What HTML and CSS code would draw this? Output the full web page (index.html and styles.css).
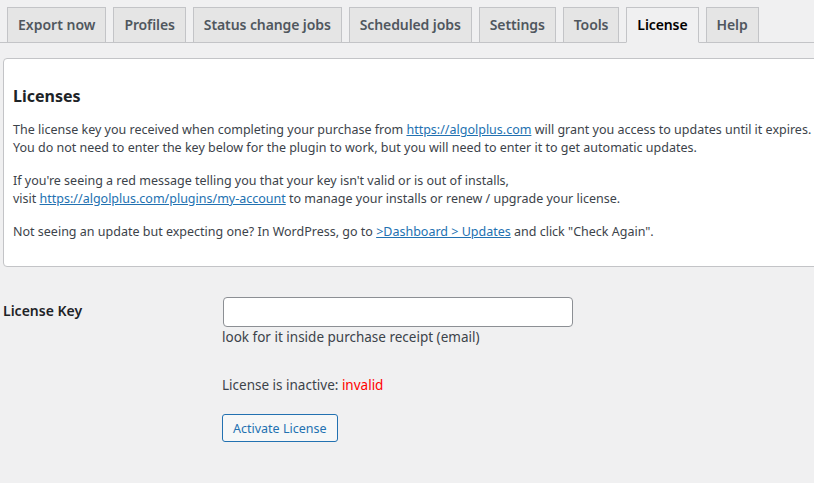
FILE: index.html
```html
<!DOCTYPE html>
<html lang="en">
<head>
  <meta charset="UTF-8" />
  <title>License</title>
  <link rel="stylesheet" href="styles.css">
</head>
<body>
  <nav class="nav-tabs">
    <a class="nav-tab">Export now</a>
    <a class="nav-tab">Profiles</a>
    <a class="nav-tab">Status change jobs</a>
    <a class="nav-tab">Scheduled jobs</a>
    <a class="nav-tab">Settings</a>
    <a class="nav-tab">Tools</a>
    <a class="nav-tab active">License</a>
    <a class="nav-tab">Help</a>
  </nav>

  <div class="license-box">
    <h2>Licenses</h2>
    <p>The license key you received when completing your purchase from <a href="#">https://algolplus.com</a> will grant you access to updates until it expires.<br>
    You do not need to enter the key below for the plugin to work, but you will need to enter it to get automatic updates.</p>
    <p>If you're seeing a red message telling you that your key isn't valid or is out of installs,<br>
    visit <a href="#">https://algolplus.com/plugins/my-account</a> to manage your installs or renew / upgrade your license.</p>
    <p>Not seeing an update but expecting one? In WordPress, go to <a href="#">&gt;Dashboard &gt; Updates</a> and click "Check Again".</p>
  </div>

  <div class="form-row">
    <label class="form-label" for="license-key">License Key</label>
    <div class="form-field">
      <input type="text" id="license-key" class="key-input">
      <p class="description">look for it inside purchase receipt (email)</p>
      <p class="status">License is inactive: <span class="invalid">invalid</span></p>
      <button class="button">Activate License</button>
    </div>
  </div>
</body>
</html>
```

FILE: styles.css
```css
body {
  margin: 0;
  padding: 7px 0 0 3px;
  background-color: #f0f0f1;
  color: #3c434a;
  font-family: "Noto Sans", sans-serif;
  font-size: 12.5px;
  overflow: hidden;
}

/* Tabs */
.nav-tabs {
  display: flex;
  gap: 7px;
  padding-left: 7px;
  margin-left: -3px;
  border-bottom: 1px solid #c3c4c7;
}

.nav-tab {
  display: block;
  padding: 5px 10px;
  margin-bottom: -1px;
  font-size: 14px;
  font-weight: 600;
  line-height: 24px;
  color: #50575e;
  background-color: #e5e5e5;
  border: 1px solid #c3c4c7;
  text-decoration: none;
  white-space: nowrap;
}

.nav-tab + .nav-tab {
  letter-spacing: -0.1px;
}

.nav-tab.active {
  color: #000;
  background-color: #f0f0f1;
  border-bottom-color: #f0f0f1;
}

/* Licenses box */
.license-box {
  margin-top: 15px;
  width: 840px;
  padding: 8px 9px 10px;
  background-color: #fff;
  border: 1px solid #c3c4c7;
  border-radius: 4px;
}

.license-box h2 {
  font-size: 16px;
  font-weight: 700;
  color: #1d2327;
  margin: 18px 0 14px;
}

.license-box p {
  margin: 15px 0;
  line-height: 18px;
}

.license-box p:first-of-type {
  margin-top: 0;
}

a {
  color: #2271b1;
}

/* Form */
.form-row {
  display: flex;
  margin-top: 30px;
}

.form-label {
  width: 219px;
  padding-top: 4px;
  font-size: 14px;
  font-weight: 600;
  color: #1d2327;
}

.form-field p {
  margin: 0;
  font-size: 13.5px;
}

.key-input {
  display: block;
  box-sizing: border-box;
  width: 350px;
  height: 30px;
  margin: 0 0 0 1px;
  border: 1px solid #8c8f94;
  border-radius: 4px;
  background: #fff;
}

.description {
  line-height: 21px;
}

.status {
  margin-top: 26px !important;
  line-height: 22px;
}

.invalid {
  color: #ff0000;
}

.button {
  margin-top: 18px;
  padding: 0 10px;
  height: 28px;
  font-family: inherit;
  font-size: 12.5px;
  color: #2271b1;
  background-color: #f6f7f7;
  border: 1px solid #2271b1;
  border-radius: 3px;
}
```
